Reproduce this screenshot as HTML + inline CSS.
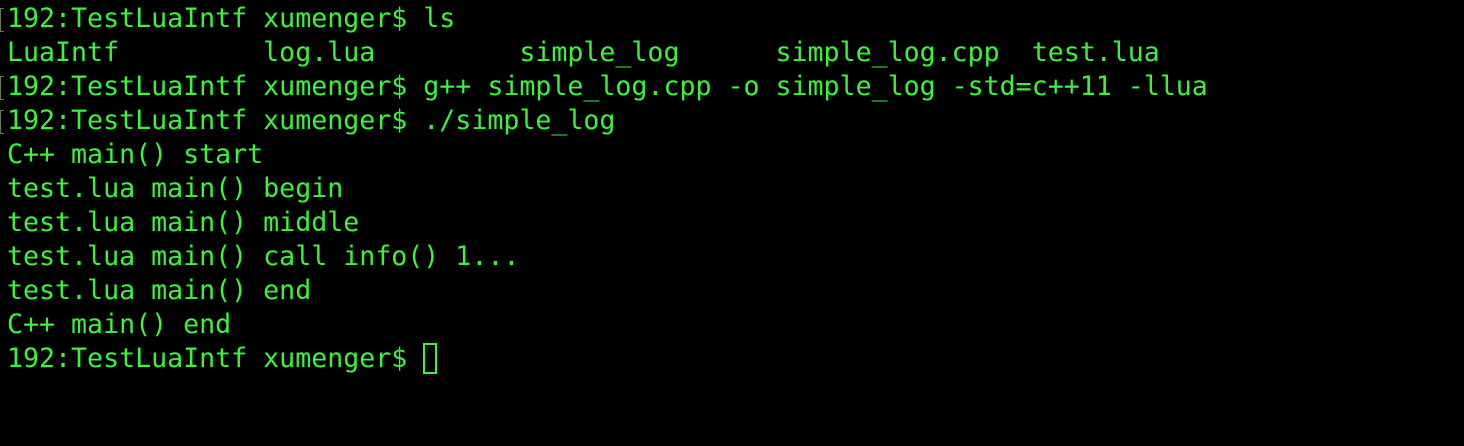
<!DOCTYPE html>
<html><head><style>
html,body{margin:0;padding:0;background:#000;width:1464px;height:446px;overflow:hidden}
pre{margin:0;position:absolute;left:7px;top:2px;font-family:"DejaVu Sans Mono","Liberation Mono",monospace;font-size:26.6px;line-height:34px;color:#3df23d}
.b{position:absolute;left:0;width:4px;height:24px;border:1px solid #6a7a5a;border-right:none;box-sizing:border-box}
.cur{display:inline-block;width:14px;height:31px;border:2px solid #3df23d;box-sizing:border-box;vertical-align:-7px}
</style></head><body>
<div class="b" style="top:8px"></div>
<div class="b" style="top:76px"></div>
<div class="b" style="top:110px"></div>
<pre>192:TestLuaIntf xumenger$ ls
LuaIntf         log.lua         simple_log      simple_log.cpp  test.lua
192:TestLuaIntf xumenger$ g++ simple_log.cpp -o simple_log -std=c++11 -llua
192:TestLuaIntf xumenger$ ./simple_log
C++ main() start
test.lua main() begin
test.lua main() middle
test.lua main() call info() 1...
test.lua main() end
C++ main() end
192:TestLuaIntf xumenger$ <span class="cur"></span></pre>
</body></html>
